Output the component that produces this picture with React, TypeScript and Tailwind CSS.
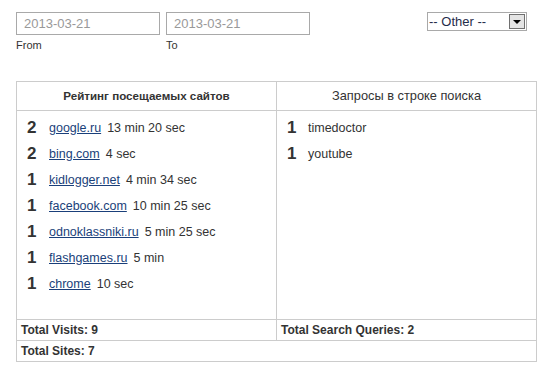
import React from 'react'

const sites = [
  { n: 2, name: 'google.ru', time: '13 min 20 sec' },
  { n: 2, name: 'bing.com', time: '4 sec' },
  { n: 1, name: 'kidlogger.net', time: '4 min 34 sec' },
  { n: 1, name: 'facebook.com', time: '10 min 25 sec' },
  { n: 1, name: 'odnoklassniki.ru', time: '5 min 25 sec' },
  { n: 1, name: 'flashgames.ru', time: '5 min' },
  { n: 1, name: 'chrome', time: '10 sec' },
]

const queries = [
  { n: 1, text: 'timedoctor' },
  { n: 1, text: 'youtube' },
]

function DateField({ value, label }: { value: string; label: string }) {
  return (
    <div className="flex flex-col">
      <div className="w-[144px] h-[23px] border border-[#a9a9a9] flex items-center px-[7px] text-[13px] text-[#999] leading-none">
        {value}
      </div>
      <span className="text-[11px] text-[#333] mt-[3px] leading-[14px]">{label}</span>
    </div>
  )
}

export default function App() {
  return (
    <div className="w-[555px] h-[386px] bg-white pl-4 pt-3 text-[#333]" style={{ fontFamily: '"Liberation Sans", Arial, sans-serif' }}>
      <div className="flex w-[511px]">
        <div className="flex gap-[6px]">
          <DateField value="2013-03-21" label="From" />
          <DateField value="2013-03-21" label="To" />
        </div>
        <div className="ml-auto w-[100px] h-[19px] border border-[#a9a9a9] flex items-center">
          <span className="flex-1 pl-[1px] text-[13px] text-[#1f2d4a] leading-none">-- Other --</span>
          <span className="w-[16px] h-[15px] mr-[1px] bg-[#e4e4e4] border border-[#707070] flex items-center justify-center">
            <span className="w-0 h-0 border-l-[4px] border-r-[4px] border-t-[4px] border-l-transparent border-r-transparent border-t-black" />
          </span>
        </div>
      </div>

      <table className="mt-[29px] w-[520px] border-collapse table-fixed text-[12px]">
        <colgroup>
          <col className="w-[260px]" />
          <col className="w-[260px]" />
        </colgroup>
        <thead>
          <tr className="h-[29px]">
            <th className="border border-[#ccc] font-bold text-center text-[11.6px]">Рейтинг посещаемых сайтов</th>
            <th className="border border-[#ccc] font-normal text-center text-[12.8px]">Запросы в строке поиска</th>
          </tr>
        </thead>
        <tbody>
          <tr className="h-[209px]">
            <td className="border border-[#ccc] align-top pl-[10px] pt-[4px]">
              <div className="flex flex-col">
                {sites.map((s, i) => (
                  <div key={i} className="flex items-center h-[26px] text-[12.5px]">
                    <span className="w-[22px] text-[17px] font-bold text-[#333]">{s.n}</span>
                    <a href="#" className="text-[#1a3f7a] underline">{s.name}</a>
                    <span className="ml-[6px]">{s.time}</span>
                  </div>
                ))}
              </div>
            </td>
            <td className="border border-[#ccc] align-top pl-[10px] pt-[4px]">
              <div className="flex flex-col">
                {queries.map((q, i) => (
                  <div key={i} className="flex items-center h-[26px] text-[12.5px]">
                    <span className="w-[21px] text-[17px] font-bold">{q.n}</span>
                    <span>{q.text}</span>
                  </div>
                ))}
              </div>
            </td>
          </tr>
          <tr className="h-[21px]">
            <td className="border border-[#ccc] px-[4px] font-bold">Total Visits: 9</td>
            <td className="border border-[#ccc] px-[4px] font-bold">Total Search Queries: 2</td>
          </tr>
          <tr className="h-[21px]">
            <td colSpan={2} className="border border-[#ccc] px-[4px] font-bold">Total Sites: 7</td>
          </tr>
        </tbody>
      </table>
    </div>
  )
}
